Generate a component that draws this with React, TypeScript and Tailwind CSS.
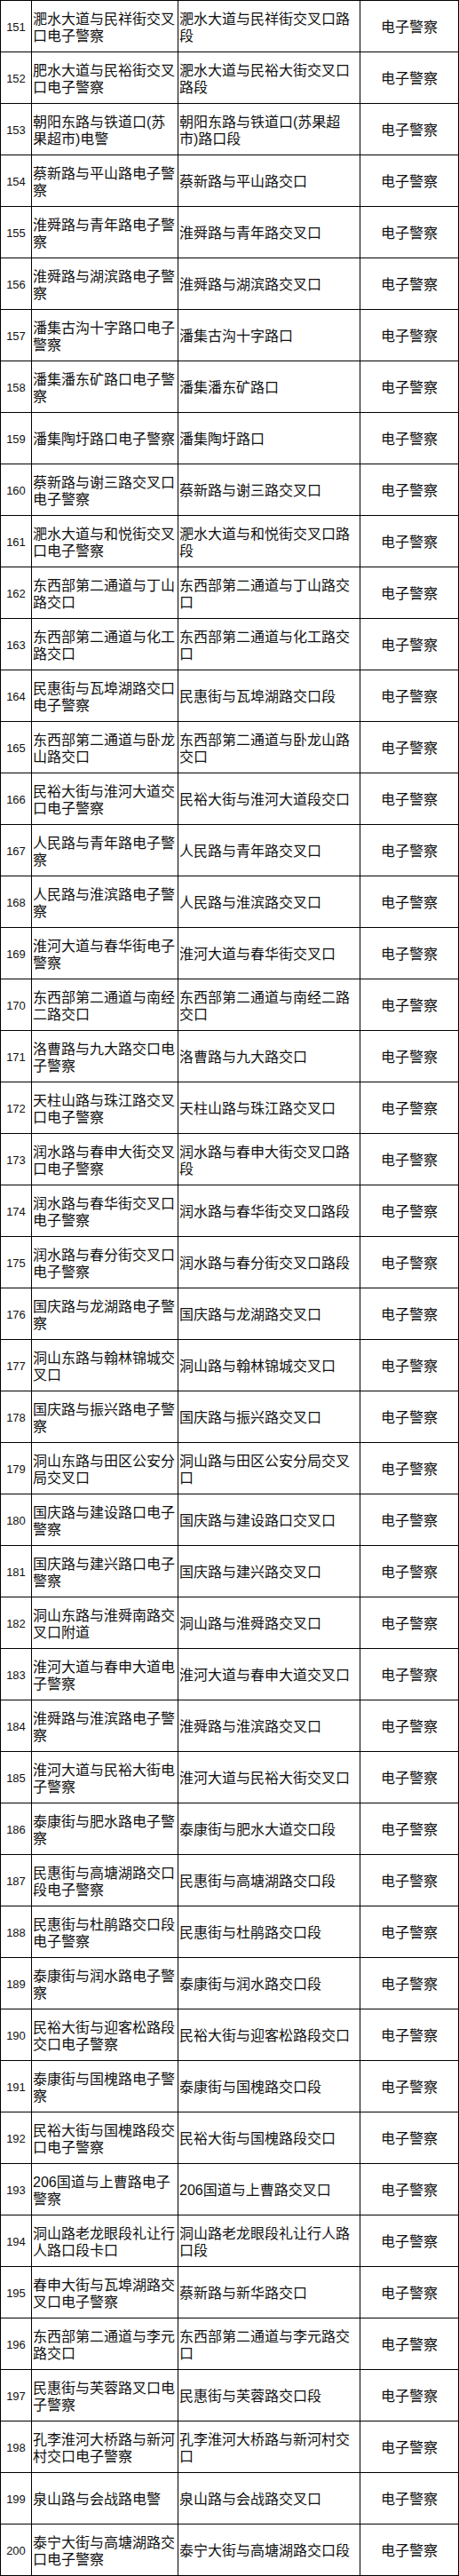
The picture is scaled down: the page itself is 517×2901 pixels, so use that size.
const rows: [number, string, string][] = [
  [151, "淝水大道与民祥街交叉\n口电子警察", "淝水大道与民祥街交叉口路\n段"],
  [152, "肥水大道与民裕街交叉\n口电子警察", "淝水大道与民裕大街交叉口\n路段"],
  [153, "朝阳东路与铁道口(苏\n果超市)电警", "朝阳东路与铁道口(苏果超\n市)路口段"],
  [154, "蔡新路与平山路电子警\n察", "蔡新路与平山路交口"],
  [155, "淮舜路与青年路电子警\n察", "淮舜路与青年路交叉口"],
  [156, "淮舜路与湖滨路电子警\n察", "淮舜路与湖滨路交叉口"],
  [157, "潘集古沟十字路口电子\n警察", "潘集古沟十字路口"],
  [158, "潘集潘东矿路口电子警\n察", "潘集潘东矿路口"],
  [159, "潘集陶圩路口电子警察", "潘集陶圩路口"],
  [160, "蔡新路与谢三路交叉口\n电子警察", "蔡新路与谢三路交叉口"],
  [161, "淝水大道与和悦街交叉\n口电子警察", "淝水大道与和悦街交叉口路\n段"],
  [162, "东西部第二通道与丁山\n路交口", "东西部第二通道与丁山路交\n口"],
  [163, "东西部第二通道与化工\n路交口", "东西部第二通道与化工路交\n口"],
  [164, "民惠街与瓦埠湖路交口\n电子警察", "民惠街与瓦埠湖路交口段"],
  [165, "东西部第二通道与卧龙\n山路交口", "东西部第二通道与卧龙山路\n交口"],
  [166, "民裕大街与淮河大道交\n口电子警察", "民裕大街与淮河大道段交口"],
  [167, "人民路与青年路电子警\n察", "人民路与青年路交叉口"],
  [168, "人民路与淮滨路电子警\n察", "人民路与淮滨路交叉口"],
  [169, "淮河大道与春华街电子\n警察", "淮河大道与春华街交叉口"],
  [170, "东西部第二通道与南经\n二路交口", "东西部第二通道与南经二路\n交口"],
  [171, "洛曹路与九大路交口电\n子警察", "洛曹路与九大路交口"],
  [172, "天柱山路与珠江路交叉\n口电子警察", "天柱山路与珠江路交叉口"],
  [173, "润水路与春申大街交叉\n口电子警察", "润水路与春申大街交叉口路\n段"],
  [174, "润水路与春华街交叉口\n电子警察", "润水路与春华街交叉口路段"],
  [175, "润水路与春分街交叉口\n电子警察", "润水路与春分街交叉口路段"],
  [176, "国庆路与龙湖路电子警\n察", "国庆路与龙湖路交叉口"],
  [177, "洞山东路与翰林锦城交\n叉口", "洞山路与翰林锦城交叉口"],
  [178, "国庆路与振兴路电子警\n察", "国庆路与振兴路交叉口"],
  [179, "洞山东路与田区公安分\n局交叉口", "洞山路与田区公安分局交叉\n口"],
  [180, "国庆路与建设路口电子\n警察", "国庆路与建设路口交叉口"],
  [181, "国庆路与建兴路口电子\n警察", "国庆路与建兴路交叉口"],
  [182, "洞山东路与淮舜南路交\n叉口附道", "洞山路与淮舜路交叉口"],
  [183, "淮河大道与春申大道电\n子警察", "淮河大道与春申大道交叉口"],
  [184, "淮舜路与淮滨路电子警\n察", "淮舜路与淮滨路交叉口"],
  [185, "淮河大道与民裕大街电\n子警察", "淮河大道与民裕大街交叉口"],
  [186, "泰康街与肥水路电子警\n察", "泰康街与肥水大道交口段"],
  [187, "民惠街与高塘湖路交口\n段电子警察", "民惠街与高塘湖路交口段"],
  [188, "民惠街与杜鹃路交口段\n电子警察", "民惠街与杜鹃路交口段"],
  [189, "泰康街与润水路电子警\n察", "泰康街与润水路交口段"],
  [190, "民裕大街与迎客松路段\n交口电子警察", "民裕大街与迎客松路段交口"],
  [191, "泰康街与国槐路电子警\n察", "泰康街与国槐路交口段"],
  [192, "民裕大街与国槐路段交\n口电子警察", "民裕大街与国槐路段交口"],
  [193, "206国道与上曹路电子\n警察", "206国道与上曹路交叉口"],
  [194, "洞山路老龙眼段礼让行\n人路口段卡口", "洞山路老龙眼段礼让行人路\n口段"],
  [195, "春申大街与瓦埠湖路交\n叉口电子警察", "蔡新路与新华路交口"],
  [196, "东西部第二通道与李元\n路交口", "东西部第二通道与李元路交\n口"],
  [197, "民惠街与芙蓉路叉口电\n子警察", "民惠街与芙蓉路交口段"],
  [198, "孔李淮河大桥路与新河\n村交口电子警察", "孔李淮河大桥路与新河村交\n口"],
  [199, "泉山路与会战路电警", "泉山路与会战路交叉口"],
  [200, "泰宁大街与高塘湖路交\n口电子警察", "泰宁大街与高塘湖路交口段"],
];

export default function App() {
  return (
    <div className="w-[517px] bg-white text-[#111] font-['Liberation_Sans','Noto_Sans_CJK_SC',sans-serif]">
      <div className="border-l border-t border-black">
        {rows.map(([n, place, spot]) => (
          <div key={n} className="grid grid-cols-[35px_165px_205px_111px] h-[58px]">
            <div className="border-r border-b border-black flex items-center justify-center pt-[3px] text-[13px]">
              {n}
            </div>
            <div className="border-r border-b border-black flex items-center pl-px pt-[2px] text-[16px] leading-[19px]">
              <div className="whitespace-pre-line">{place}</div>
            </div>
            <div className="border-r border-b border-black flex items-center pl-px pt-[2px] text-[16px] leading-[19px]">
              <div className="whitespace-pre-line">{spot}</div>
            </div>
            <div className="border-r border-b border-black flex items-center justify-center pt-[2px] text-[16px]">
              电子警察
            </div>
          </div>
        ))}
      </div>
    </div>
  );
}
